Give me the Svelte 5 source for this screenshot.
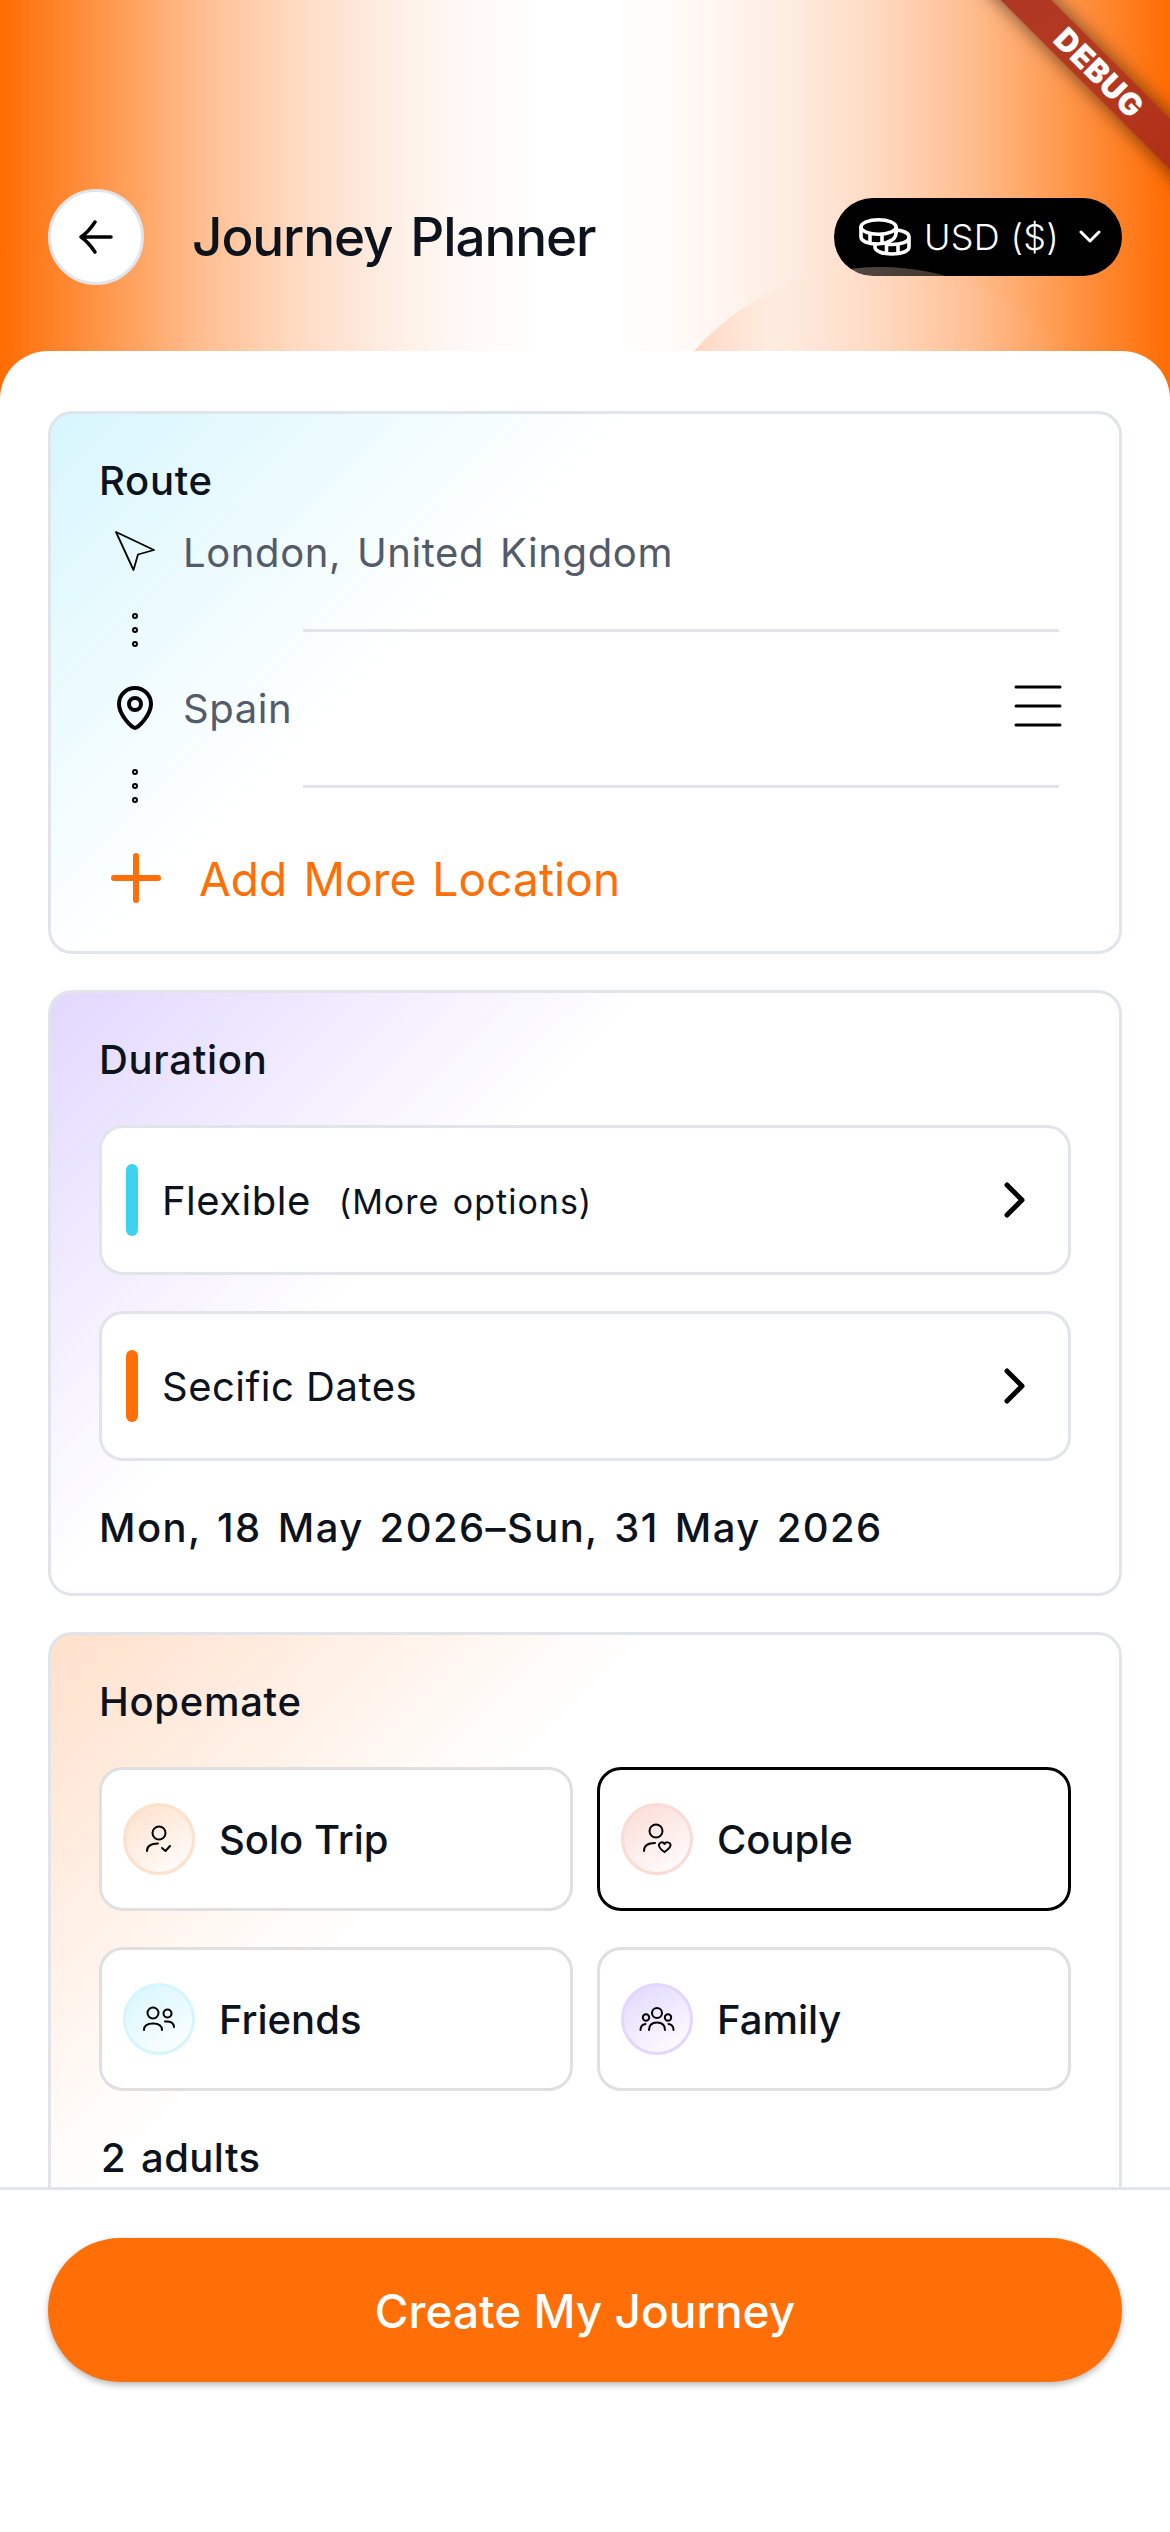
<script lang="ts">
type Tone = 'orange' | 'red' | 'cyan' | 'violet'
type Mate = { label: string, icon: string, tone: Tone }

const places = [
    { name: 'London, United Kingdom', icon: 'arrow' },
    { name: 'Spain', icon: 'pin' },
]

const durations = [
    { label: 'Flexible', hint: '(More options)', tone: 'cyan' },
    { label: 'Secific Dates', hint: '', tone: 'orange' },
]

const mates: Mate[] = [
    { label: 'Solo Trip', icon: 'solo', tone: 'orange' },
    { label: 'Couple', icon: 'couple', tone: 'red' },
    { label: 'Friends', icon: 'friends', tone: 'cyan' },
    { label: 'Family', icon: 'family', tone: 'violet' },
]

let selectedMate = $state('Couple')
</script>

<div class="screen">
    <header class="header">
        <button class="back" aria-label="Back">
            <svg width="36" height="36" viewBox="0 0 36 36">
                <path d="M33 18H3M17 3C13 9 9 14 3 18C9 22 13 27 17 33" />
            </svg>
        </button>
        <h1>Journey Planner</h1>
        <button class="currency">
            <svg class="coins" width="52" height="38" viewBox="0 0 52 38">
                <ellipse cx="19.500" cy="9" rx="17.500" ry="7.200" />
                <path d="M2 9V19C2 23 9 26 18 26C23 26 27 25 30 23.500M37 9V15M11 16V24.500M23 17V25" />
                <path d="M38 12C46 13 50 16 50 19C50 24 42 26.500 33 26.500C31 26.500 29 26.500 27 26M30 23.500C34 22 37 19 37 15M16 26V29C16 33 23 36 33 36C43 36 50 33 50 29V19M27.500 27V35M39 26.500V35" />
            </svg>
            <span>USD ($)</span>
            <svg class="caret" width="22" height="14" viewBox="0 0 22 14">
                <path d="M2 2L11 11L20 2" />
            </svg>
        </button>
        <div class="glow"></div>
    </header>

    <main class="sheet">
        <section class="card route">
            <h2>Route</h2>
            {#each places as place, i}
                <div class="place">
                    <span class="place-icon">
                        {#if place.icon === 'arrow'}
                            <svg width="42" height="44" viewBox="0 0 42 44" stroke-width="1.8">
                                <path d="M2 2L40 20L24 24.500L19.500 40Z" />
                            </svg>
                        {:else}
                            <svg width="40" height="46" viewBox="0 0 40 46" stroke-width="4">
                                <path d="M20 43C17 43 4 30 4 19A16 16 0 0 1 36 19C36 30 23 43 20 43Z" />
                                <circle cx="20" cy="19" r="6" />
                            </svg>
                        {/if}
                    </span>
                    <span class="place-name">{place.name}</span>
                    {#if i > 0}
                        <svg class="handle" width="48" height="44" viewBox="0 0 48 44">
                            <path d="M2 3H46M2 22H46M2 41H46" />
                        </svg>
                    {/if}
                </div>
                <div class="connector">
                    <svg width="8" height="36" viewBox="0 0 8 36">
                        <circle cx="4" cy="4" r="2" />
                        <circle cx="4" cy="18" r="2" />
                        <circle cx="4" cy="32" r="2" />
                    </svg>
                    <hr />
                </div>
            {/each}
            <button class="add">
                <svg width="50" height="50" viewBox="0 0 50 50">
                    <path d="M25 3V47M3 25H47" />
                </svg>
                <span>Add More Location</span>
            </button>
        </section>

        <section class="card duration">
            <h2>Duration</h2>
            {#each durations as option}
                <button class="option">
                    <i class="bar {option.tone}"></i>
                    <span class="option-label">{option.label}</span>
                    {#if option.hint}
                        <small>{option.hint}</small>
                    {/if}
                    <svg class="chevron" width="24" height="38" viewBox="0 0 24 38">
                        <path d="M4 4L19 19L4 34" />
                    </svg>
                </button>
            {/each}
            <p class="dates">Mon, 18 May 2026–Sun, 31 May 2026</p>
        </section>

        <section class="card hopemate">
            <h2>Hopemate</h2>
            <div class="mates">
                {#each mates as mate}
                    <button
                        class="mate"
                        class:active={selectedMate === mate.label}
                        onclick={() => selectedMate = mate.label}
                    >
                        <span class="avatar {mate.tone}">
                            <svg width="36" height="36" viewBox="0 0 36 36">
                                {#if mate.icon === 'solo'}
                                    <circle cx="18" cy="12" r="6.500" />
                                    <path d="M6 30C6 25 10 22.500 17 22.500M21 27L24.500 30L29 25" />
                                {:else if mate.icon === 'couple'}
                                    <circle cx="17" cy="10" r="6.500" />
                                    <path d="M5 30C5 25 9 22 16 22M25.500 31C21 28 19.500 26 20 23.500C20.500 21 24 20.500 25.500 23C27 20.500 31 21 31.500 23.500C32 26 30 28 25.500 31Z" />
                                {:else if mate.icon === 'friends'}
                                    <circle cx="12" cy="12" r="5.500" />
                                    <circle cx="26.500" cy="12.500" r="4" />
                                    <path d="M3 29C3 25 6 22.500 12 22.500C18 22.500 21 25 21 29M24 20.500C30 20 33 22 33 26" />
                                {:else}
                                    <circle cx="18" cy="12" r="5" />
                                    <circle cx="7" cy="16.500" r="3.200" />
                                    <circle cx="29" cy="16.500" r="3.200" />
                                    <path d="M10 29C10 24 12 21.500 18 21.500C24 21.500 26 24 26 29M1.500 29C1.500 25 3 23.500 6.500 23M34.500 29C34.500 25 33 23.500 29.500 23" />
                                {/if}
                            </svg>
                        </span>
                        {mate.label}
                    </button>
                {/each}
            </div>
            <p class="count">2 adults</p>
        </section>
    </main>

    <footer class="footer">
        <button class="create">Create My Journey</button>
    </footer>

    <div class="ribbon"><span>DEBUG</span></div>
</div>

<style>
    :global(body) {
        margin: 0;
        background: #fff;
    }

    .screen {
        position: relative;
        display: flex;
        flex-direction: column;
        width: 1170px;
        height: 2532px;
        overflow: hidden;
        color: #0d131c;
        font-family: Inter, "Liberation Sans", sans-serif;
        font-size: 40px;
        background: #fff;
    }

    h1, h2, p {
        margin: 0;
    }

    button {
        margin: 0;
        padding: 0;
        border: 0;
        box-sizing: border-box;
        background: none;
        color: inherit;
        font: inherit;
        letter-spacing: inherit;
        cursor: pointer;
    }

    svg {
        display: block;
        flex: none;
        fill: none;
        stroke: #000;
        stroke-linecap: round;
        stroke-linejoin: round;
    }

    .header {
        position: relative;
        display: flex;
        flex: none;
        align-items: center;
        height: 399px;
        padding: 123px 48px 48px;
        box-sizing: border-box;
        overflow: hidden;
        background: linear-gradient(90deg,
            #ff6c02 0%,
            #ff9548 8.5%,
            #ffbd8f 17%,
            #ffd9c0 25%,
            #fdebe0 32%,
            #fff8f4 39%,
            #fff 46%,
            #fff 53%,
            #fff8f4 60%,
            #fdebe0 68%,
            #ffd9c0 75%,
            #ffbd8f 83%,
            #ff9548 91.5%,
            #ff6c02 100%);
    }

    .glow {
        position: absolute;
        top: 267px;
        left: 632px;
        width: 496px;
        height: 496px;
        border-radius: 50%;
        background: linear-gradient(90deg, rgba(255, 175, 130, 0.5) 10%, rgba(255, 232, 218, 0.4) 28%, rgba(254, 220, 198, 0.3) 50%, rgba(255, 165, 105, 0.2) 85%);
    }

    .back {
        display: flex;
        align-items: center;
        justify-content: center;
        width: 96px;
        height: 96px;
        border: 3px solid #e1e4eb;
        border-radius: 50%;
        background: #fff;
    }

    .back svg {
        stroke-width: 3.5;
    }

    h1 {
        margin-left: 48px;
        font-size: 53px;
        font-weight: 500;
        letter-spacing: -1.1px;
        word-spacing: 5px;
    }

    .currency {
        display: flex;
        align-items: center;
        width: 288px;
        height: 78px;
        margin-left: auto;
        padding-left: 25px;
        border-radius: 39px;
        background: #000;
        color: #fff;
        font-size: 36px;
        font-weight: 300;
        letter-spacing: 0.3px;
    }

    .currency svg {
        stroke: #fff;
        stroke-width: 3;
    }

    .currency .coins {
        stroke-width: 3.6;
    }

    .currency span {
        margin: 0 20px 0 13px;
    }

    .sheet {
        position: relative;
        flex: 1;
        min-height: 0;
        margin-top: -48px;
        padding: 60px 48px 0;
        overflow: hidden;
        border-radius: 48px 48px 0 0;
        background: #fff;
    }

    .card {
        display: flex;
        flex-direction: column;
        box-sizing: border-box;
        margin-bottom: 36px;
        padding: 36px 48px;
        border: 3px solid #e1e4eb;
        border-radius: 24px;
        --tint: #d6f6fd;
        background: linear-gradient(135deg, var(--tint), #fff 36%);
    }

    .route {
        padding-bottom: 19px;
    }

    .duration {
        --tint: #e2d7ff;
    }

    .hopemate {
        --tint: #ffe0cb;
    }

    h2 {
        height: 60px;
        font-size: 40px;
        font-weight: 500;
        letter-spacing: 0.7px;
        line-height: 62px;
    }

    .place {
        display: flex;
        align-items: center;
        height: 84px;
        color: #535a69;
        letter-spacing: 0.6px;
        word-spacing: 4px;
    }

    .place-icon {
        display: flex;
        justify-content: center;
        width: 72px;
    }

    .place-name {
        margin-left: 12px;
    }

    .handle {
        margin: -4px 9px 0 auto;
        stroke-width: 3;
    }

    .connector {
        display: flex;
        align-items: center;
        height: 72px;
        padding: 0 12px 0 32px;
    }

    .connector svg {
        stroke-width: 2;
    }

    .connector hr {
        flex: 1;
        height: 3px;
        margin: 0 0 0 164px;
        border: 0;
        background: #e1e4eb;
    }

    .add {
        display: flex;
        align-items: center;
        gap: 38px;
        height: 110px;
        padding: 1px 0 0 12px;
        color: #ff6e07;
        font-size: 46px;
        letter-spacing: 0.1px;
        word-spacing: 3px;
    }

    .add span {
        padding-top: 3px;
    }

    .add svg {
        stroke: #ff6e07;
        stroke-width: 6;
    }

    .option {
        display: flex;
        align-items: center;
        height: 150px;
        margin-top: 36px;
        padding: 0 41px 0 24px;
        border: 3px solid #e1e4eb;
        border-radius: 24px;
        background: #fff;
        letter-spacing: 0.5px;
    }

    .bar {
        width: 12px;
        height: 72px;
        margin-right: 24px;
        border-radius: 6px;
    }

    .bar.cyan {
        background: #3cd3f0;
    }

    .bar.orange {
        background: #ff6e07;
    }

    .option small {
        margin: 3px 0 0 28px;
        font-size: 34px;
        letter-spacing: 1px;
        word-spacing: 3px;
    }

    .chevron {
        margin-left: auto;
        stroke-width: 5;
    }

    .dates, .count {
        height: 60px;
        margin-top: 36px;
        font-weight: 500;
        line-height: 61px;
    }

    .dates {
        letter-spacing: 1.4px;
        word-spacing: 4px;
    }

    .count {
        padding-left: 2px;
        letter-spacing: 0.4px;
        word-spacing: 4px;
    }

    .mates {
        display: grid;
        grid-template-columns: 1fr 1fr;
        gap: 36px 24px;
        margin-top: 36px;
    }

    .mate {
        display: flex;
        align-items: center;
        gap: 24px;
        height: 144px;
        padding-left: 21px;
        border: 3px solid #e0e0e0;
        border-radius: 24px;
        background: #fff;
        font-weight: 500;
    }

    .mate.active {
        border-color: #000;
    }

    .avatar {
        display: flex;
        align-items: center;
        justify-content: center;
        width: 72px;
        height: 72px;
        box-sizing: border-box;
        border: 3px solid var(--tint);
        border-radius: 50%;
        background: linear-gradient(150deg, var(--tint), #fff);
        stroke-width: 2;
    }

    .avatar.orange {
        --tint: #ffe0cb;
    }

    .avatar.red {
        --tint: #fbdbd5;
    }

    .avatar.cyan {
        --tint: #d6f6fd;
    }

    .avatar.violet {
        --tint: #e2d7ff;
    }

    .footer {
        position: relative;
        flex: none;
        height: 345px;
        padding: 48px;
        box-sizing: border-box;
        border-top: 3px solid #e1e4eb;
        background: #fff;
    }

    .create {
        width: 100%;
        height: 144px;
        padding-top: 2px;
        border-radius: 72px;
        background: #ff6e07;
        box-shadow: 0 3px 6px rgba(0, 0, 0, 0.28);
        color: #fff;
        font-size: 46px;
        font-weight: 500;
    }

    /* corner banner, centred on the point 72px in from both edges */
    .ribbon {
        position: absolute;
        top: 54px;
        right: -128px;
        width: 400px;
        height: 36px;
        transform: rotate(45deg);
        background: linear-gradient(90deg, #ad3528, #b3391f 50%, #b02812);
        box-shadow: 0 0 20px rgba(0, 0, 0, 0.6);
        color: #fff;
        font-size: 31px;
        font-weight: 900;
        letter-spacing: 0.8px;
        line-height: 36px;
        text-align: center;
    }

    .ribbon span {
        padding-left: 3px;
    }
</style>
